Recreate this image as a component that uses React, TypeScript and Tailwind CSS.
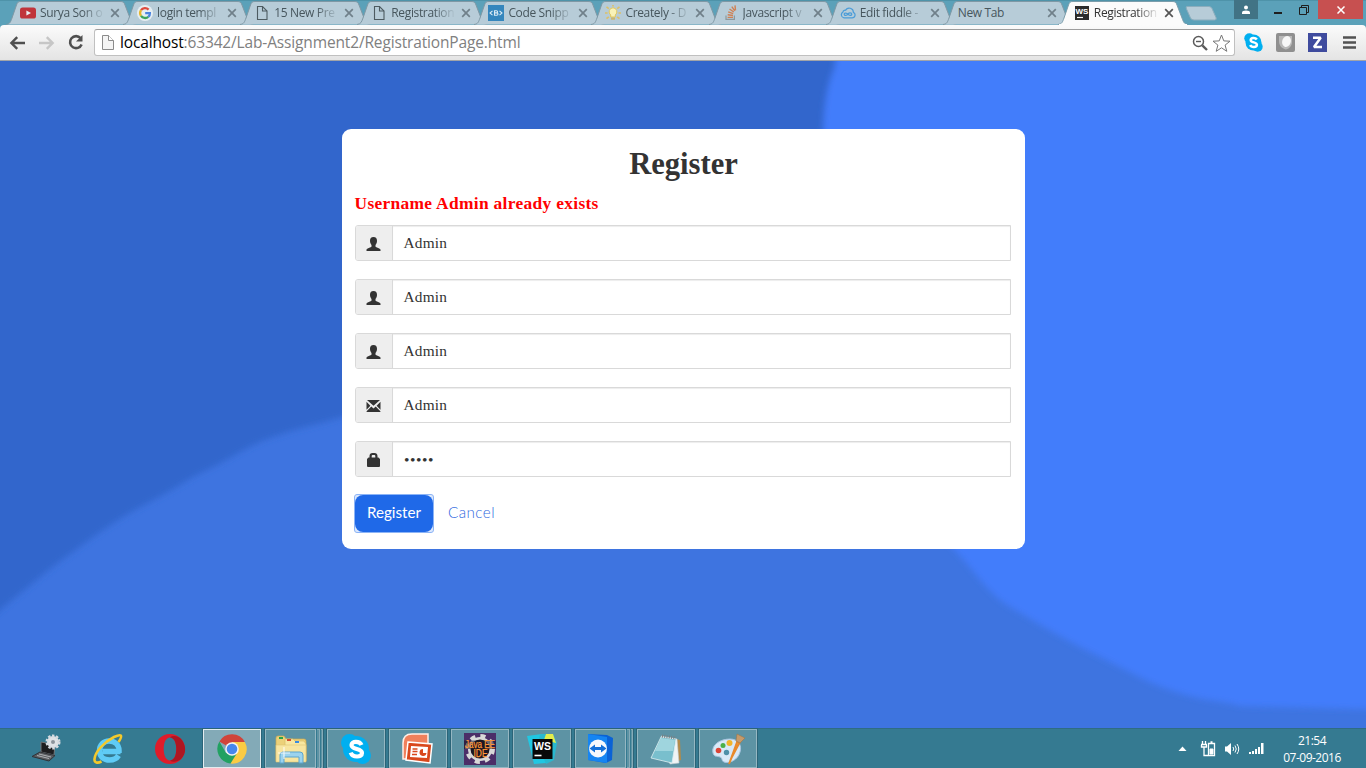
import React from "react";

const UI = "font-['Open_Sans','Noto_Sans',sans-serif]";

/* ---------- tab favicons ---------- */

const PageIcon = () => (
  <svg width="16" height="16" viewBox="0 0 16 16" fill="none" stroke="#4d5b61" strokeWidth="1.1">
    <path d="M3.500 1.500h5l4.500 4.500v8.500H3.500z" />
    <path d="M8.500 1.500v4.500h4.500" />
  </svg>
);
const YoutubeIcon = () => (
  <svg width="16" height="16" viewBox="0 0 16 16">
    <rect x="0" y="2.5" width="16" height="11" rx="2.6" fill="#c0343b" />
    <path d="M6.4 5.4v5.2L11 8z" fill="#e9eef1" />
  </svg>
);
const GoogleIcon = () => (
  <svg width="16" height="16" viewBox="0 0 16 16">
    <circle cx="8" cy="8" r="8" fill="#e6eef2" />
    <g fill="none" strokeWidth="2.3">
      <path d="M4 5.2A4.9 4.9 0 0 1 11.6 4.6" stroke="#dd4b3e" />
      <path d="M4 5.2a5 5 0 0 0 0 5.6" stroke="#e8b62c" />
      <path d="M4 10.8a4.9 4.9 0 0 0 7.3 1" stroke="#3ba55c" />
      <path d="M11.3 11.8c1.2-1 1.7-2.2 1.6-3.6H8.2" stroke="#4a84e0" />
    </g>
  </svg>
);
const SnippIcon = () => (
  <svg width="16" height="16" viewBox="0 0 16 16">
    <rect width="16" height="16" fill="#3486bd" />
    <path d="M4.5 5.8 2 8l2.5 2.2M11.5 5.8 14 8l-2.5 2.2" stroke="#dcecf5" fill="none" strokeWidth="1.1" />
    <path d="M6.5 5.7h2a1.1 1.1 0 0 1 0 2.2h-2zm0 2.2h2.3a1.2 1.2 0 0 1 0 2.4H6.5z" stroke="#dcecf5" fill="none" strokeWidth="1.1" />
  </svg>
);
const BulbIcon = () => (
  <svg width="16" height="16" viewBox="0 0 16 16">
    <g stroke="#dcc06a" strokeWidth="1.7">
      <path d="M1.500 1.800l2.300 1.800M14.500 1.800l-2.300 1.800M0 8h2.600M16 8h-2.600M1.500 13.600l2.300-1.800M14.500 13.600l-2.300-1.800M8 0v1.400" />
    </g>
    <path d="M8 2.800a4 4 0 0 0-2.300 7.200v2h4.6v-2A4 4 0 0 0 8 2.800z" fill="#f8f2b8" stroke="#e2c75c" />
    <path d="M6 12.5h4v2.200H6z" fill="#c9b672" />
  </svg>
);
const StackIcon = () => (
  <svg width="16" height="16" viewBox="0 0 16 16" fill="none">
    <path d="M3 10.4v4h8.400v-4" stroke="#8e989c" strokeWidth="1.2" />
    <g stroke="#cf8154" strokeWidth="1.4">
      <path d="M4.6 12.4H10M4.7 9.8l5.300.7M5.2 6.9l5 1.800M6.5 4l4.300 3M8.8 1.600l3 4.300M12 .4l.5 5" />
    </g>
  </svg>
);
const FiddleIcon = () => (
  <svg width="17" height="16" viewBox="0 0 17 16" fill="none" stroke="#4a9cd8" strokeWidth="1.3">
    <path d="M4.2 13.2a3.400 3.400 0 0 1-1-6.300A2.200 2.200 0 0 1 6 5a4.400 4.400 0 0 1 8.200 2.300 3.100 3.100 0 0 1-1.400 5.900z" />
    <path d="M8.5 9.200C7.6 8 4.6 7.400 4.500 9.300s3 1.500 4-.1 4-1.700 4 .1-3.100 1.400-4-.1z" />
  </svg>
);
const WsMini = () => (
  <svg width="14" height="14" viewBox="0 0 14 14">
    <rect width="14" height="14" fill="#2b2b2b" />
    <text x="0.6" y="8.300" fontSize="7.600" fontWeight="bold" textLength="12.800" lengthAdjust="spacingAndGlyphs" fontFamily="Liberation Sans, sans-serif" fill="#fff">WS</text>
    <path d="M2 11.500h6" stroke="#fff" strokeWidth="1.200" />
  </svg>
);

type TabInfo = { title: string; icon?: React.ReactNode; active?: boolean };
const tabs: TabInfo[] = [
  { title: "Surya Son o", icon: <YoutubeIcon /> },
  { title: "login templ", icon: <GoogleIcon /> },
  { title: "15 New Pre", icon: <PageIcon /> },
  { title: "Registration", icon: <PageIcon /> },
  { title: "Code Snipp", icon: <SnippIcon /> },
  { title: "Creately - D", icon: <BulbIcon /> },
  { title: "Javascript v", icon: <StackIcon /> },
  { title: "Edit fiddle -", icon: <FiddleIcon /> },
  { title: "New Tab" },
  { title: "Registration", icon: <WsMini />, active: true },
];

const Tab = ({ title, icon, active }: TabInfo) => (
  <div className={active ? "relative z-10 h-[25px] w-[117.1px] shrink-0" : "relative h-[25px] w-[117.1px] shrink-0"}>
    <svg className={active ? "absolute top-0 left-[-2px]" : "absolute top-0 left-0"} width="132" height="25" viewBox="0 0 132 25">
      <path
        d="M0 24.500C4 24 4.500 22 6 18L10.500 5C11.500 2 12.500 1.500 15 1.500H114C117 1.500 118 2 119 5L124 18C125.500 22 126 24 130 24.500"
        fill={active ? "#fbfbfb" : "#b7ccd8"}
        stroke={active ? "#7b9dab" : "#7f98a5"}
        strokeWidth="1"
      />
      {active && <path d="M1 25h128" stroke="#fbfbfb" strokeWidth="2" />}
    </svg>
    <div className="relative flex h-[25px] items-center pt-[1px] pl-[14px]">
      {icon && <span className="mr-[4px] flex w-[16px] shrink-0 justify-center">{icon}</span>}
      <span
        className={
          (active ? "text-[#333] " : "text-[#47565d] ") +
          (icon
            ? "w-[65px] [mask-image:linear-gradient(to_right,black_65%,transparent_100%)] "
            : "w-[85px] pl-px ") +
          "shrink-0 text-[12px] leading-[16px] tracking-[-0.35px] whitespace-nowrap"
        }
      >
        {title}
      </span>
      <svg className="ml-[5px] shrink-0" width="10" height="10" viewBox="0 0 10 10">
        <path d="M1.200 1.200l7.600 7.600M8.800 1.200L1.200 8.800" stroke={active ? "#555" : "#70808a"} strokeWidth="1.700" />
      </svg>
    </div>
  </div>
);

const WindowControls = () => (
  <div className="mr-[3px] ml-auto flex h-[19px] text-white">
    <div className="flex h-[19px] w-[24px] items-center justify-center bg-[#417385]">
      <svg width="10" height="10" viewBox="0 0 10 10" fill="#fff">
        <circle cx="5" cy="2.500" r="2" />
        <path d="M1 9V7.500Q1 5.500 5 5.500T9 7.500V9z" />
      </svg>
    </div>
    <div className="flex w-[60px] items-center justify-between pr-[9px] pl-[16px]">
      <svg width="8" height="10" viewBox="0 0 8 10"><path d="M0 8h8" stroke="#1e1e1e" strokeWidth="2" /></svg>
      <svg width="10" height="10" viewBox="0 0 10 10" fill="none" stroke="#1e1e1e">
        <path d="M.5 2.500h7v7h-7zM2.500 2.500v-2h7v7h-2" />
      </svg>
    </div>
    <div className="flex w-[45px] items-center justify-center bg-[#c75050]">
      <svg width="8" height="8" viewBox="0 0 8 8"><path d="M.5.5l7 7M7.500.5l-7 7" stroke="#fff" strokeWidth="1.500" /></svg>
    </div>
  </div>
);

const Toolbar = () => (
  <div className="flex h-[36px] items-center rounded-t-[4px] border-b border-[#a2a4a8] bg-gradient-to-b from-[#fbfbfb] to-[#e4e4e4] pl-[9px]">
    <svg width="17" height="14" viewBox="0 0 17 14" fill="none" stroke="#4f4f4f" strokeWidth="2.400">
      <path d="M16 7H3M8.200 1.200L2.400 7l5.800 5.800" />
    </svg>
    <svg className="ml-[12px]" width="17" height="14" viewBox="0 0 17 14" fill="none" stroke="#c6c6c6" strokeWidth="2.400">
      <path d="M1 7h13M8.800 1.200L14.600 7l-5.800 5.800" />
    </svg>
    <svg className="ml-[12px]" width="18" height="17" viewBox="0 0 18 17">
      <path d="M13.600 4.200A6 6 0 1 0 14.600 10.500" fill="none" stroke="#4f4f4f" strokeWidth="2.600" />
      <path d="M15.500 1v6.500H9z" fill="#4f4f4f" />
    </svg>
    <div className="ml-[9px] flex h-[27px] w-[1141px] items-center rounded-[3px] border border-[#c0c0c0] border-t-[#9d9d9d] bg-white pr-[3px] pl-[7px]">
      <svg width="12" height="15" viewBox="0 0 12 15" fill="#f4f4f4" stroke="#8b8b8b">
        <path d="M.5.5h6l5 5v9H.5z" />
        <path d="M6.500.5v5h5" fill="#fff" />
      </svg>
      <span className="ml-[6px] -mt-px text-[15.500px] leading-[20px] tracking-[-0.150px] whitespace-nowrap text-[#808080]">
        <span className="text-black">localhost</span>:63342/Lab-Assignment2/RegistrationPage.html
      </span>
      <svg className="ml-auto" width="16" height="16" viewBox="0 0 16 16" fill="none" stroke="#5b5b5b">
        <circle cx="6.500" cy="6.500" r="5" strokeWidth="1.500" />
        <path d="M4 6.500h5" strokeWidth="1.400" />
        <path d="M10.300 10.300l4.700 4.700" strokeWidth="2.400" />
      </svg>
      <svg className="ml-[4px]" width="19" height="18" viewBox="0 0 19 18" fill="#fff" stroke="#777" strokeLinejoin="round">
        <path d="M9.500 1l2.300 5.900 6.200.3-4.900 3.900 1.700 6.200-5.300-3.500-5.300 3.500 1.700-6.200L1 7.200l6.200-.3z" />
      </svg>
    </div>
    <svg className="ml-[9px]" width="19" height="19" viewBox="0 0 19 19">
      <circle cx="9.500" cy="9.500" r="8" fill="#00aff0" /><circle cx="5.300" cy="5.300" r="5" fill="#00aff0" /><circle cx="13.700" cy="13.700" r="5" fill="#00aff0" />
      <path d="M12.800 6.500C11.500 4.300 6.700 4.300 6.700 6.900c0 3.200 6.200 1.800 6.200 4.900 0 3-5.600 2.900-6.700.3" fill="none" stroke="#fff" strokeWidth="2.500" />
    </svg>
    <svg className="ml-[13px]" width="19" height="19" viewBox="0 0 19 19">
      <rect width="19" height="19" rx="2" fill="#8f8f8f" />
      <path d="M3 3h13v6c0 4-3 7-6.500 7.500C5 15 3 12 3 8z" fill="#b9b9b9" />
      <ellipse cx="10.500" cy="8.500" rx="4.300" ry="5.500" fill="#f7f7f7" transform="rotate(20 10.500 8.500)" />
    </svg>
    <svg className="ml-[13px]" width="19" height="19" viewBox="0 0 19 19">
      <rect width="19" height="19" fill="#3f4b9e" />
      <path d="M5 4.700h7.700L6 14h8" fill="none" stroke="#fff" strokeWidth="2.500" strokeLinejoin="bevel" />
    </svg>
    <svg className="ml-[16px]" width="13" height="13" viewBox="0 0 13 13"><path d="M0 1.500h13M0 6.500h13M0 11.500h13" stroke="#525252" strokeWidth="2.600" /></svg>
  </div>
);

/* ---------- page backdrop ---------- */

const Backdrop = () => (
  <svg className="absolute inset-0" width="1366" height="667" viewBox="0 61 1366 667" preserveAspectRatio="none">
    <defs>
      <filter id="soft" x="-5%" y="-5%" width="110%" height="110%"><feGaussianBlur stdDeviation="3" /></filter>
    </defs>
    <rect y="61" width="1366" height="667" fill="#3e74e0" />
    <path d="M-20 630L0 610C25 590 45 572 70 554S115 520 148 503 185 480 209 469 245 446 279 435 320 424 345 416L420 395 900 395V40H-20z" fill="#3166cc" filter="url(#soft)" />
    <path d="M835 40V66Q824 90 823 130V330Q860 470 950 545C975 570 985 592 1012 608S1065 640 1098 656 1145 682 1176 692 1220 700 1240 706L1390 710V40z" fill="#427dfb" filter="url(#soft)" />
  </svg>
);

/* ---------- form ---------- */

const UserGlyph = () => (
  <svg width="15" height="14" viewBox="0 0 15 14" fill="#333">
    <path d="M7.500 0C5 0 4 1.500 4 3.700c0 1.700.5 3.200 1.500 4.200v1.600C5 10.700.9 11 .5 12.700V14h14v-1.300c-.4-1.700-4.500-2-5-3.200V7.900c1-1 1.500-2.500 1.500-4.200C11 1.500 10 0 7.500 0z" />
  </svg>
);
const MailGlyph = () => (
  <svg width="15" height="12" viewBox="0 0 15 12" fill="#333">
    <path d="M1 0h13L7.500 5.800zM.5 1.700L4.400 5.700.5 9.700zM14.500 1.700v8l-3.900-4zM.6 12v-.7l4.700-4.700 2.200 1.900 2.200-1.900 4.700 4.700v.7z" />
  </svg>
);
const LockGlyph = () => (
  <svg width="13" height="14" viewBox="0 0 13 14" fill="#333">
    <path d="M2.500 4.500V3c0-2 1.200-3 3-3h2c1.800 0 3 1 3 3v1.500h1L13 6v7q0 1-1 1H1q-1 0-1-1V6l1.500-1.500zM4.700 4.500h3.600V3q0-.9-.9-.9H5.600q-.9 0-.9.9z" />
  </svg>
);

const fields = [
  { icon: <UserGlyph />, value: "Admin" },
  { icon: <UserGlyph />, value: "Admin" },
  { icon: <UserGlyph />, value: "Admin" },
  { icon: <MailGlyph />, value: "Admin" },
  { icon: <LockGlyph />, value: "•••••" },
];

const RegisterCard = () => (
  <div className="relative mt-[68px] h-[420px] w-[683px] rounded-[9px] bg-white px-[13px] pr-[14px] font-['Liberation_Serif',serif] text-[#333]">
    <h2 className="pt-[17px] pl-[2px] text-center text-[30.600px] leading-[36px] font-bold">Register</h2>
    <h4 className="mt-[11px] text-[17.400px] leading-[20px] font-bold tracking-[0.320px] text-[#f00]">Username Admin already exists</h4>
    <div className="mt-[12px] flex flex-col gap-[18px]">
      {fields.map((f, i) => (
        <div key={i} className="flex h-[36px] rounded-l-[3px] border border-[#d9d9d9]">
          <div className="flex w-[37px] shrink-0 items-center justify-center rounded-l-[2px] border-r border-[#d9d9d9] bg-[#eee] pt-[2px]">
            {f.icon}
          </div>
          <div
            className={
              f.value === "Admin"
                ? "flex flex-1 items-center pl-[11px] text-[15.300px] tracking-[0.250px] shadow-[inset_0_1px_1px_rgba(0,0,0,0.075)]"
                : "flex flex-1 items-center pt-px pl-[11.500px] text-[15.500px] tracking-[0.550px] shadow-[inset_0_1px_1px_rgba(0,0,0,0.075)]"
            }
          >
            {f.value}
          </div>
        </div>
      ))}
    </div>
    <div className="mt-[17px] flex items-center font-['Lato',sans-serif]">
      <div className="-ml-px rounded-[3px] border border-[#8cb4f6] bg-[#dbe8fd]">
        <button className="flex h-[37px] w-[78px] items-center justify-center rounded-[8px] bg-[#1f69e8] pb-[2px] pl-px text-[15.200px] text-white">Register</button>
      </div>
      <a className="ml-[14.500px] pb-[2px] text-[15.200px] font-light tracking-[0.450px] text-[#2f68e0]">Cancel</a>
    </div>
  </div>
);

/* ---------- taskbar ---------- */

const DeviceIcon = () => (
  <svg width="32" height="32" viewBox="0 0 32 32">
    <path d="M11 9l14 2.500-1 10.500-13-3z" fill="#1d1d1f" stroke="#74777a" />
    <path d="M10 19l15 3.500-6 5.500L2 23.500z" fill="#5c5e62" stroke="#303236" />
    <path d="M7 22.500l12 3M9 21l12 3" stroke="#adb0b3" strokeWidth="1" />
    <circle cx="23" cy="9" r="6" fill="#dfe2e6" stroke="#d5dae0" strokeWidth="3" strokeDasharray="2.300 1.500" />
    <circle cx="23" cy="9" r="2" fill="#8d949c" />
  </svg>
);
const IeIcon = () => (
  <svg width="32" height="32" viewBox="0 0 32 32">
    <path d="M28.500 18.500H10.500M27 20V17.500C27 11.500 22.500 8 17 8S7.500 12 7.500 17.800 12 27 17.500 27c4 0 7-1.200 9-4.500" fill="none" stroke="#5fcbf6" strokeWidth="5.500" />
    <path d="M26.500 9C31.500 1.500 29 .8 22 4 12 9 3 19 2.500 26c-.3 4 3 4.500 7 2.500" fill="none" stroke="#f4c92b" strokeWidth="2.600" />
  </svg>
);
const OperaIcon = () => (
  <svg width="32" height="32" viewBox="0 0 32 32">
    <path fillRule="evenodd" d="M16 1C7 1 1 8 1 16s6 15 15 15 15-7 15-15S25 1 16 1zm0 3.500c4 0 6.300 5 6.300 11.500S20 27.500 16 27.500 9.700 22.500 9.700 16 12 4.500 16 4.500z" fill="#df1c2a" />
    <path d="M16 4.500C19 2 24 3 27 6c6 7 5 15 0 20-4 3-8 3.500-11 1.500 4 0 6.300-5 6.300-11.500S20 4.500 16 4.500z" fill="#ad1622" />
  </svg>
);
const ChromeIcon = () => (
  <svg width="32" height="32" viewBox="0 0 32 32">
    <path d="M16 16L3.400 8.500A14.600 14.600 0 0 1 28.800 9z" fill="#d0443a" />
    <path d="M16 16L14.500 30.600A14.600 14.600 0 0 0 28.800 9H16z" fill="#fbcb43" />
    <path d="M3.400 8.500L10 20l10.500 1-6 9.600A14.600 14.600 0 0 1 3.400 8.500z" fill="#22a162" />
    <circle cx="16" cy="16" r="6.800" fill="#f3f3f3" /><circle cx="16" cy="16" r="5.300" fill="#4787ed" />
  </svg>
);
const ExplorerIcon = () => (
  <svg width="34" height="32" viewBox="0 0 34 32">
    <path d="M2 5q0-2 2-2h6l2 3h18q2 0 2 2v20H2z" fill="#ecd17a" stroke="#cba950" strokeWidth=".7" />
    <path d="M11 6h8l2 2h9l2 3v17H11z" fill="#f8e7a0" stroke="#d9bd68" strokeWidth=".7" />
    <path d="M2 12h30v17H2z" fill="#f7e5a0" stroke="#dfc473" strokeWidth=".6" />
    <path d="M5 5h4" stroke="#2ba34a" strokeWidth="2" /><path d="M13 7h4" stroke="#d54c2f" strokeWidth="2" /><path d="M21 9h4" stroke="#3a8be0" strokeWidth="2" />
    <path d="M6 30v-8q0-3 3-3h17q3 0 3 3v8h-4v-6H10v6z" fill="#9bd3ee" stroke="#5aa5cf" />
    <path d="M4 20h12M10 14v12" stroke="#fff" strokeWidth="1.200" opacity=".8" />
  </svg>
);
const SkypeIcon = () => (
  <svg width="32" height="32" viewBox="0 0 32 32">
    <g fill="#00aff0"><circle cx="16" cy="16" r="13" /><circle cx="9.500" cy="9.500" r="8.500" /><circle cx="22.500" cy="22.500" r="8.500" /></g>
    <path d="M21.500 12C19.500 7.500 11.500 8 11.500 12c0 5 10.500 3 10.500 8 0 4.700-9.500 4.700-11.300-.4" fill="none" stroke="#fff" strokeWidth="4.200" />
  </svg>
);
const PptIcon = () => (
  <svg width="34" height="32" viewBox="0 0 34 32">
    <path d="M2 26V10q0-9 9-9h16v9L8 26z" fill="#f0805c" stroke="#fff0e8" strokeWidth="1.500" />
    <path d="M7 9l24 2-2 19-24-3z" fill="#d9481d" stroke="#fff" strokeWidth="1.500" />
    <path d="M10 13l17 1-1 11-17-1z" fill="#fff" />
    <path d="M11.500 16h5M11.500 18.500h5M11 21.500h5" stroke="#d9481d" strokeWidth="1.500" />
    <path d="M22 16a3.500 3.500 0 1 0 3.500 4H22z" fill="#d9481d" />
  </svg>
);
const JavaIcon = () => (
  <svg width="32" height="32" viewBox="0 0 32 32">
    <rect width="32" height="32" fill="#4b2e68" />
    <circle cx="16" cy="16" r="12.700" fill="none" stroke="#d8d8d8" strokeWidth="4.500" strokeDasharray="5 4.970" />
    <circle cx="16" cy="16" r="10.800" fill="#1c1722" stroke="#d8d8d8" strokeWidth="2.500" />
    <path d="M0 7.500h32v8.500H0z" fill="#1c1722" opacity=".55" />
    <g fontFamily="Liberation Sans, sans-serif" fill="#ff9838" stroke="#ff9838" strokeWidth=".25" fontSize="10">
      <text x="1" y="15" textLength="30" lengthAdjust="spacingAndGlyphs">Java EE</text>
      <text x="9.500" y="24" textLength="14" lengthAdjust="spacingAndGlyphs">IDE</text>
    </g>
  </svg>
);
const WebstormIcon = () => (
  <svg width="32" height="32" viewBox="0 0 32 32">
    <path d="M1 3l15-2 7 10-3 19-12 1z" fill="#21c7e2" />
    <path d="M14 1h13l4 9-3 17-8 4-8-20z" fill="#29b8cf" /><path d="M20 1h7l3 9-12-3z" fill="#e3ed4b" />
    <rect x="6.500" y="6" width="20" height="20" fill="#080808" />
    <text x="8" y="16.500" fontSize="11" fontWeight="bold" textLength="17" lengthAdjust="spacingAndGlyphs" fontFamily="Liberation Sans, sans-serif" fill="#fff">WS</text>
    <path d="M8.500 22.500h7" stroke="#fff" strokeWidth="1.600" />
  </svg>
);
const TeamViewerIcon = () => (
  <svg width="32" height="32" viewBox="0 0 32 32">
    <path d="M3 1l19 1 6 3-1 22-6 3L3 27z" fill="#0a62d6" /><path d="M3 1l19 3v26L3 27z" fill="#1685f2" />
    <circle cx="13" cy="15.500" r="9" fill="#f5f8fc" />
    <path d="M4.500 15.500l5.500-4v2.600h6v-2.600l5.500 4-5.500 4v-2.600h-6v2.600z" fill="#126fd8" />
  </svg>
);
const NotepadIcon = () => (
  <svg width="32" height="32" viewBox="0 0 32 32">
    <path d="M26 6l4 1 1 20-5 2z" fill="#b28b4a" />
    <path d="M11 3l16 3 2 24-9 1z" fill="#f0f4f5" stroke="#c2cdd0" strokeWidth=".6" />
    <path d="M11 4l15 2-4 24L1 25z" fill="#79bfcd" stroke="#e0f0f2" strokeWidth=".8" />
    <path d="M11 5l14 2-2 11-18 0z" fill="#b4e1e6" opacity=".65" />
    <path d="M12 3l14 2" stroke="#7b7f80" strokeWidth="3" strokeDasharray="1 1.300" />
  </svg>
);
const PaintIcon = () => (
  <svg width="34" height="32" viewBox="0 0 34 32">
    <path d="M2 20C0 12 9 6 19 6c9 0 12 7 10 13-2 8-11 12-16 10-3-1-1-4-4-5s-6 0-7-4z" fill="#d8e9f7" stroke="#a7c4de" />
    <circle cx="7.500" cy="17.500" r="2.800" fill="#dc4436" /><circle cx="12" cy="12.500" r="2.500" fill="#4bb047" /><circle cx="18.500" cy="10" r="3" fill="#f2b42b" /><circle cx="15.500" cy="19.500" r="2.700" fill="#4e90a8" />
    <path d="M26 9L18 31l3-7 8-15z" fill="#f0932f" stroke="#e8892b" strokeWidth="1.800" />
    <path d="M25 8l1-7 8 4-5 5z" fill="#c69a6a" stroke="#9e774c" strokeWidth=".6" />
  </svg>
);

type Slot = { icon: React.ReactNode; kind: "pinned" | "open" | "active" | "stack" };
const slots: Slot[] = [
  { icon: <DeviceIcon />, kind: "pinned" },
  { icon: <IeIcon />, kind: "pinned" },
  { icon: <OperaIcon />, kind: "pinned" },
  { icon: <ChromeIcon />, kind: "active" },
  { icon: <ExplorerIcon />, kind: "stack" },
  { icon: <SkypeIcon />, kind: "open" },
  { icon: <PptIcon />, kind: "open" },
  { icon: <JavaIcon />, kind: "open" },
  { icon: <WebstormIcon />, kind: "open" },
  { icon: <TeamViewerIcon />, kind: "stack" },
  { icon: <NotepadIcon />, kind: "open" },
  { icon: <PaintIcon />, kind: "open" },
];

const TaskButton = ({ icon, kind }: Slot) => {
  if (kind === "pinned") return <div className="flex h-[39px] w-[58px] items-center justify-center">{icon}</div>;
  if (kind === "active")
    return <div className="flex h-[39px] w-[58px] items-center justify-center border border-[#e2ecef] bg-[#83aab7] outline outline-[#2b6478]">{icon}</div>;
  if (kind === "stack")
    return (
      <div className="flex h-[39px] w-[58px] outline outline-[#2b6478]">
        <div className="flex w-[51px] items-center justify-center border border-[#95b7c2] bg-[#5d93a4]">{icon}</div>
        <div className="ml-[1px] w-[3px] border border-l-0 border-[#86abb8] bg-[#5d93a4]" />
        <div className="ml-[1px] w-[2px] border border-l-0 border-[#86abb8] bg-[#5d93a4]" />
      </div>
    );
  return <div className="flex h-[39px] w-[58px] items-center justify-center border border-[#95b7c2] bg-[#5d93a4] outline outline-[#2b6478]">{icon}</div>;
};

const Taskbar = () => (
  <div className="flex h-[40px] border-t border-[#2f6c83] bg-[#357a91] pl-[17px]">
    <div className="flex gap-[4px]">
      {slots.map((s, i) => (
        <TaskButton key={i} {...s} />
      ))}
    </div>
    <div className="ml-auto flex items-center">
      <svg width="9" height="6" viewBox="0 0 9 6"><path d="M4.500.5L8.500 5h-8z" fill="#fff" /></svg>
      <svg className="ml-[13px]" width="17" height="17" viewBox="0 0 17 17" fill="none" stroke="#fff">
        <path d="M2.500 1v3M5.500 1v3M1 4.500h6M1.500 5v2h5V5M4 7v8.500h4" strokeWidth="1.300" />
        <path d="M8.500 3.500h6v12h-6zM10.500 2h2" strokeWidth="1.300" /><path d="M10 9h3v5h-3z" fill="#fff" />
      </svg>
      <svg className="ml-[7px]" width="16" height="14" viewBox="0 0 16 14">
        <path d="M1 4.500h2L7 1v12L3 9.500H1z" fill="#fff" />
        <path d="M9 5q1.500 2 0 4M11 3.500q2.500 3.500 0 7M13 2q3.500 5 0 10" fill="none" stroke="#fff" />
      </svg>
      <svg className="ml-[9px]" width="16" height="13" viewBox="0 0 16 13" fill="#fff">
        <path d="M0 10h2v2H0zM3 9h2v3H3zM6 7h2v5H6zM9 5h2v7H9zM12 1h2.500v11H12z" />
      </svg>
      <div className="mr-[24px] ml-[17px] w-[60px] text-center text-[12px] leading-[17px] tracking-[-0.500px] whitespace-nowrap text-white">
        <div>21:54</div>
        <div>07-09-2016</div>
      </div>
    </div>
  </div>
);

export default function App() {
  return (
    <div className={"flex h-[768px] w-[1366px] flex-col overflow-hidden bg-[#5ba1b9] " + UI}>
      <header className="h-[61px]">
        <div className="flex h-[25px] border-t border-[#4e93a9] pl-[6px] [&>*]:-mt-px">
          {tabs.map((t, i) => (
            <Tab key={i} {...t} />
          ))}
          <svg className="ml-[7px]" width="34" height="25" viewBox="0 0 34 25">
            <path d="M4 6.500h22q2 0 3 2l4 9q1 2.500-1.500 2.500H11q-2.500 0-3.500-2l-4-9Q2.500 6.500 4 6.500z" transform="translate(-1 0)" fill="#b7ccd8" stroke="#8badbd" />
          </svg>
          <WindowControls />
        </div>
        <Toolbar />
      </header>
      <main className="relative flex h-[667px] justify-center">
        <Backdrop />
        <RegisterCard />
      </main>
      <Taskbar />
    </div>
  );
}
